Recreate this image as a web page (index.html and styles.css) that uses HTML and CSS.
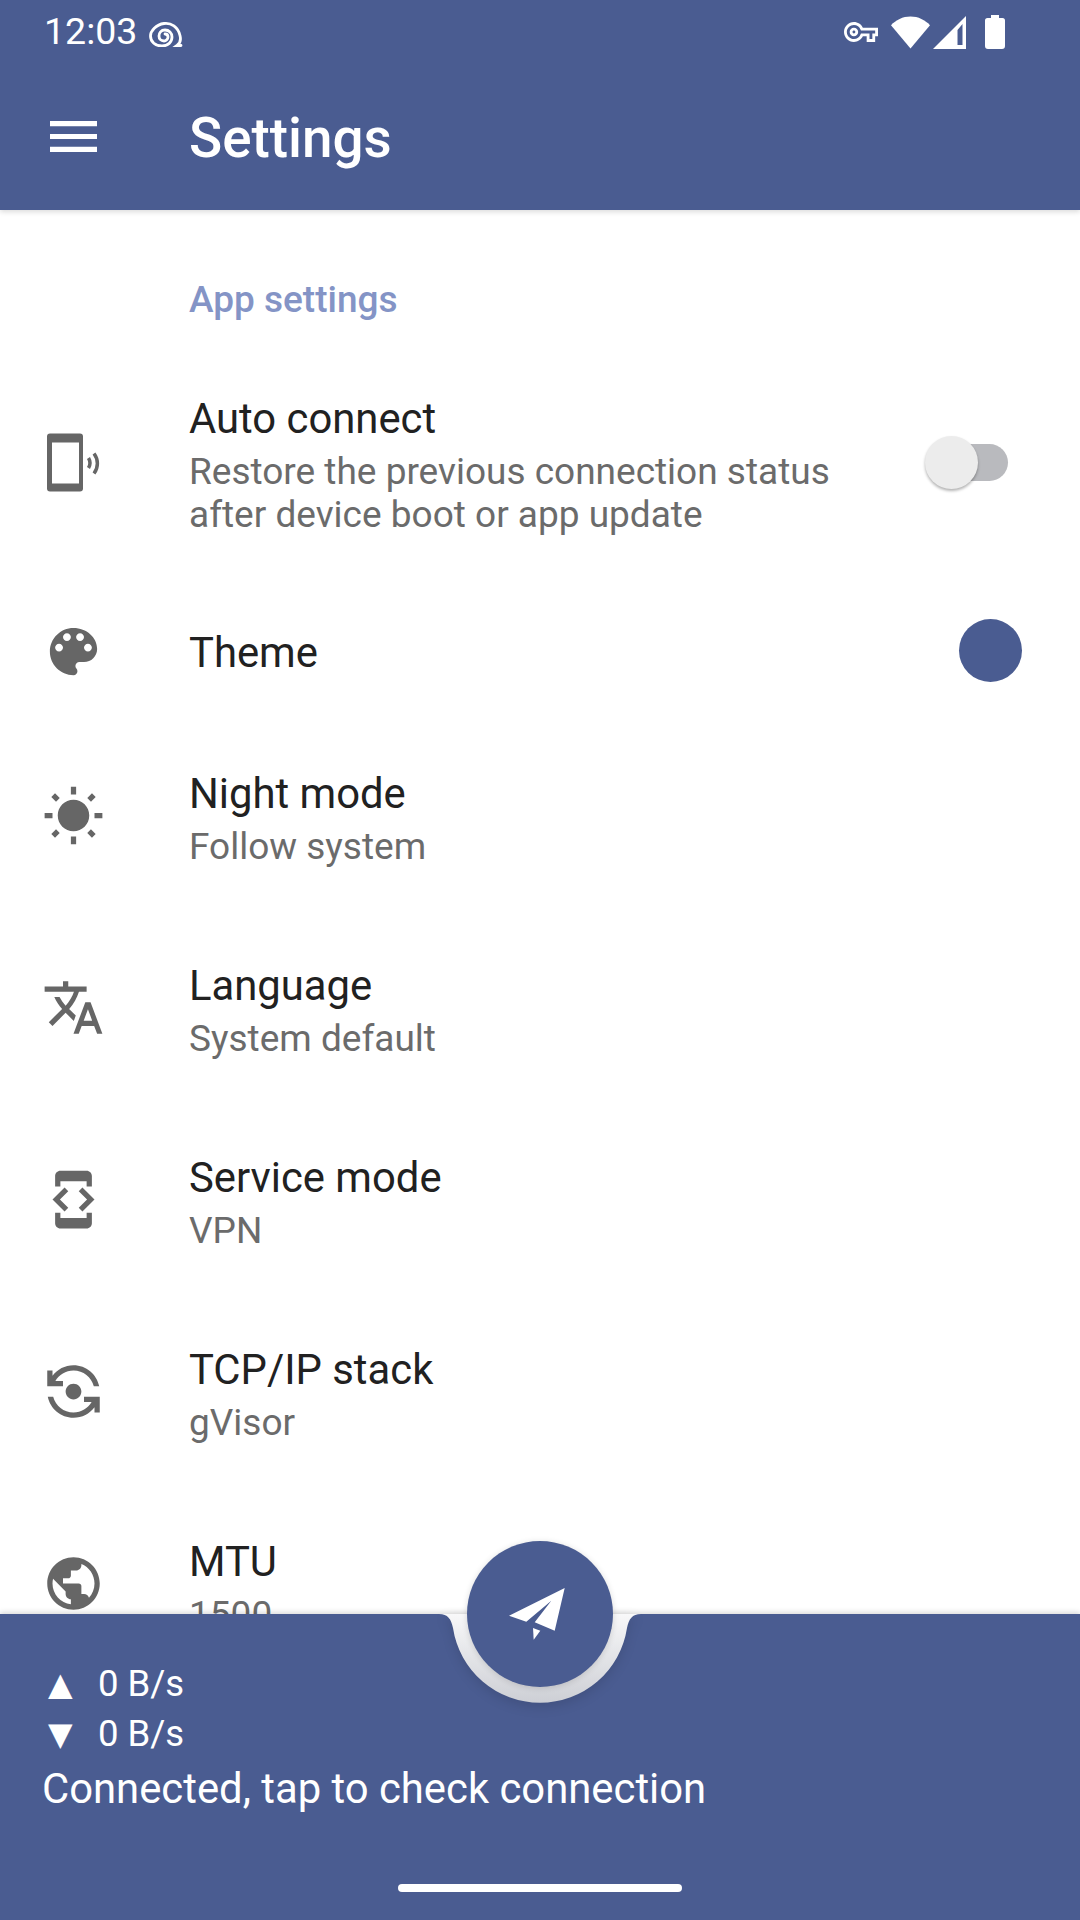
FILE: index.html
```html
<!DOCTYPE html>
<html lang="en">
<head>
  <meta charset="UTF-8" />
  <title>Settings</title>
  <link rel="stylesheet" href="styles.css">
</head>
<body>
  <header class="appbar">
    <div class="statusbar">
      <div class="status-left">
        <span class="clock">12:03</span>
        <svg class="snail" viewBox="0 0 34 26" fill="none" stroke="#fff" stroke-width="2.800" stroke-linecap="round"><path d="M32 24.500h-4c3-2 4-6 3-10C29 6 22 1.500 15 2.500 7 3.500 1.500 10 1.500 15c0 6 5 10 11.500 10 6 0 10-4 10-9 0-4-3-7-7-7-4 0-6 3-6 6 0 3 2 5 5 5 2 0 4-2 4-4 0-2-1-3-3-3"/></svg>
      </div>
      <div class="status-right">
        <svg class="st-key" viewBox="0 5 24 14"><path fill="#fff" d="M22 19h-6v-4h-2.680c-1.140 2.420-3.600 4-6.320 4-3.860 0-7-3.140-7-7s3.140-7 7-7c2.720 0 5.170 1.580 6.320 4H24v6h-2v4zm-4-2h2v-4h2v-2H11.960l-.23-.67C11.040 8.340 9.150 7 7 7c-2.760 0-5 2.240-5 5s2.240 5 5 5c2.150 0 4.040-1.340 4.730-3.330l.23-.67H18v4zM7 15c-1.650 0-3-1.350-3-3s1.350-3 3-3 3 1.350 3 3-1.350 3-3 3zm0-4c-.55 0-1 .45-1 1s.45 1 1 1 1-.45 1-1-.45-1-1-1z"/></svg>
        <svg class="st-wifi" viewBox="0 0 40 33"><path fill="#fff" d="M20 33 0 9C5 3.500 12 0 20 0s15 3.500 20 9z"/></svg>
        <svg class="st-signal" viewBox="0 0 33 33"><path fill="#fff" fill-rule="evenodd" d="M33 0v33H0zM29.500 8l-5 6v15h5z"/></svg>
        <svg class="st-battery" viewBox="0 0 20 34"><path fill="#fff" d="M6 0h8v3h3.500A2.500 2.500 0 0 1 20 5.500V31a3 3 0 0 1-3 3H3a3 3 0 0 1-3-3V5.500A2.500 2.500 0 0 1 2.500 3H6z"/></svg>
      </div>
    </div>
    <div class="toolbar">
      <svg class="menu-icon" viewBox="3 6 18 12" preserveAspectRatio="none"><path fill="#fff" d="M3 18h18v-2H3v2zm0-5h18v-2H3v2zm0-7v2h18V6H3z"/></svg>
      <h1 class="toolbar-title">Settings</h1>
    </div>
  </header>

  <main class="list">
    <div class="section-title">App settings</div>

    <div class="row row-auto">
      <svg class="row-icon" viewBox="0 0 63 63"><path fill="#666" fill-rule="evenodd" d="M8 1.500h30a3 3 0 0 1 3 3v52a3 3 0 0 1-3 3H8a3 3 0 0 1-3-3v-52a3 3 0 0 1 3-3zm2 9v41h27v-41z"/><path fill="none" stroke="#666" stroke-width="3.500" d="M46.500 26c1.800 3 1.800 7 0 10M52 21.500c4.500 6 4.500 14 0 20"/></svg>
      <div class="row-text">
        <div class="row-title">Auto connect</div>
        <div class="row-sub">Restore the previous connection status<br>after device boot or app update</div>
      </div>
      <div class="switch"><span class="switch-thumb"></span></div>
    </div>

    <div class="row row-theme">
      <svg class="row-icon" viewBox="0 0 24 24"><path fill="#666" d="M12 3c-4.970 0-9 4.030-9 9s4.030 9 9 9c.83 0 1.500-.67 1.500-1.500 0-.39-.15-.74-.39-1.010-.23-.26-.38-.61-.38-.99 0-.83.67-1.500 1.500-1.500H16c2.760 0 5-2.240 5-5 0-4.420-4.030-8-9-8zm-5.500 9c-.83 0-1.500-.67-1.500-1.500S5.670 9 6.500 9 8 9.670 8 10.500 7.330 12 6.500 12zm3-4C8.670 8 8 7.330 8 6.500S8.670 5 9.500 5s1.500.67 1.500 1.500S10.330 8 9.500 8zm5 0c-.83 0-1.500-.67-1.500-1.500S13.670 5 14.500 5s1.500.67 1.500 1.500S15.330 8 14.500 8zm3 4c-.83 0-1.500-.67-1.500-1.500S16.670 9 17.500 9s1.500.67 1.500 1.500-.67 1.500-1.500 1.500z"/></svg>
      <div class="row-text">
        <div class="row-title">Theme</div>
      </div>
      <span class="theme-dot"></span>
    </div>

    <div class="row">
      <svg class="row-icon" viewBox="0 -.5 24 24"><path fill="#666" d="M6.760 4.840l-1.800-1.790-1.410 1.410 1.790 1.790 1.420-1.410zM4 10.500H1v2h3v-2zm9-9.950h-2V3.500h2V.55zm7.450 3.910l-1.410-1.410-1.790 1.790 1.410 1.410 1.790-1.790zm-3.210 13.700l1.790 1.800 1.410-1.410-1.800-1.790-1.400 1.400zM20 10.500v2h3v-2h-3zm-8-5c-3.310 0-6 2.690-6 6s2.690 6 6 6 6-2.690 6-6-2.690-6-6-6zm-1 16.950h2V19.500h-2v2.950zm-7.450-3.910l1.410 1.410 1.790-1.800-1.410-1.410-1.790 1.800z"/></svg>
      <div class="row-text">
        <div class="row-title">Night mode</div>
        <div class="row-sub">Follow system</div>
      </div>
    </div>

    <div class="row">
      <svg class="row-icon" viewBox="0 0 24 24"><path fill="#666" d="M12.870 15.070l-2.540-2.510.03-.03c1.740-1.940 2.980-4.170 3.710-6.530H17V4h-7V2H8v2H1v1.990h11.170C11.500 7.920 10.440 9.750 9 11.350 8.070 10.320 7.300 9.190 6.690 8h-2c.73 1.630 1.730 3.170 2.980 4.560l-5.090 5.020L4 19l5-5 3.110 3.110.76-2.040zM18.500 10h-2L12 22h2l1.120-3h4.750L21 22h2l-4.500-12zm-2.620 7l1.620-4.330L19.120 17h-3.240z"/></svg>
      <div class="row-text">
        <div class="row-title">Language</div>
        <div class="row-sub">System default</div>
      </div>
    </div>

    <div class="row">
      <svg class="row-icon" viewBox="0 0 24 24"><path fill="#666" d="M7 5h10v2h2V3c0-1.100-.9-1.990-2-1.990L7 1c-1.100 0-2 .9-2 2v4h2V5zm8.410 11.590L20 12l-4.590-4.590L14 8.830 17.170 12 14 15.170l1.410 1.420zM10 15.170L6.830 12 10 8.830 8.590 7.410 4 12l4.590 4.590L10 15.170zM17 19H7v-2H5v4c0 1.100.9 2 2 2h10c1.100 0 2-.9 2-2v-4h-2v2z"/></svg>
      <div class="row-text">
        <div class="row-title">Service mode</div>
        <div class="row-sub">VPN</div>
      </div>
    </div>

    <div class="row">
      <svg class="row-icon" viewBox="0 0 24 24"><path fill="#666" d="M9 12c0 1.660 1.340 3 3 3s3-1.340 3-3-1.340-3-3-3-3 1.340-3 3zM8 10V8H5.090C6.470 5.610 9.050 4 12 4c3.720 0 6.850 2.560 7.740 6h2.060c-.93-4.560-4.960-8-9.800-8C8.730 2 5.820 3.580 4 6.010V4H2v6h6zM16 14v2h2.910c-1.380 2.390-3.960 4-6.910 4-3.720 0-6.850-2.560-7.740-6H2.200c.93 4.560 4.960 8 9.800 8 3.270 0 6.180-1.580 8-4.010V20h2v-6h-6z"/></svg>
      <div class="row-text">
        <div class="row-title">TCP/IP stack</div>
        <div class="row-sub">gVisor</div>
      </div>
    </div>

    <div class="row">
      <svg class="row-icon" viewBox="0 0 24 24"><path fill="#666" d="M12 2C6.480 2 2 6.480 2 12s4.480 10 10 10 10-4.480 10-10S17.520 2 12 2zm-1 17.930c-3.950-.49-7-3.850-7-7.930 0-.62.08-1.210.21-1.790L9 15v1c0 1.100.9 2 2 2v1.930zm6.900-2.540c-.26-.81-1-1.390-1.900-1.390h-1v-3c0-.55-.45-1-1-1H8v-2h2c.55 0 1-.45 1-1V7h2c1.100 0 2-.9 2-2v-.41c2.930 1.190 5 4.060 5 7.410 0 2.080-.8 3.970-2.100 5.390z"/></svg>
      <div class="row-text">
        <div class="row-title">MTU</div>
        <div class="row-sub">1500</div>
      </div>
    </div>
  </main>

  <footer class="bottombar">
    <svg class="notch" viewBox="0 0 240 110">
      <defs>
        <linearGradient id="notchFill" x1="0" y1="0" x2="0" y2="1">
          <stop offset="0" stop-color="#f8f8f9"/>
          <stop offset="1" stop-color="#cdcfd5"/>
        </linearGradient>
      </defs>
      <path fill="url(#notchFill)" d="M19 0C28 0 31 5 33 14A88 88 0 0 0 207 14C209 5 212 0 221 0Z"/>
    </svg>
    <button class="fab">
      <svg class="plane" viewBox="0 0 56 52"><path fill="#fff" d="M55.700 0 0 27.700l17.300 6 25-21-16.600 21.600 20 8.400z"/><path fill="#fff" d="M24 40l7.300 2.700-6.600 9z"/></svg>
    </button>
    <div class="speed-line"><span class="arrow">▲</span>0 B/s</div>
    <div class="speed-line"><span class="arrow">▼</span>0 B/s</div>
    <div class="conn-status">Connected, tap to check connection</div>
    <div class="home-indicator"></div>
  </footer>
</body>
</html>
```

FILE: styles.css
```css
html, body {
  margin: 0;
  padding: 0;
}

body {
  width: 1080px;
  height: 1920px;
  overflow: hidden;
  display: flex;
  flex-direction: column;
  background: #fff;
  font-family: Roboto, sans-serif;
}

.appbar {
  height: 210px;
  flex: none;
  background: #4a5c91;
  color: #fff;
  box-shadow: 0 2px 5px rgba(0, 0, 0, .14);
  position: relative;
  z-index: 2;
}

.statusbar {
  height: 66px;
  box-sizing: border-box;
  padding: 0 75px 2px 44px;
  display: flex;
  justify-content: space-between;
  align-items: center;
}

.status-left {
  display: flex;
  align-items: center;
  gap: 12px;
}

.clock {
  font-size: 37.500px;
  margin-bottom: 2px;
}

.snail {
  width: 34px;
  height: 26px;
  margin-top: 4px;
}

.status-right {
  display: flex;
  align-items: center;
}

.st-key {
  width: 34px;
  height: 20px;
  margin-right: 13px;
}

.st-wifi {
  width: 39px;
  height: 33px;
  margin-right: 3px;
}

.st-signal {
  width: 33px;
  height: 33px;
  margin-right: 19px;
}

.st-battery {
  width: 20px;
  height: 34px;
}

.toolbar {
  height: 144px;
  display: flex;
  align-items: center;
}

.menu-icon {
  width: 47px;
  height: 31px;
  margin: 0 92px 3px 50px;
}

.toolbar-title {
  margin: 0;
  font-size: 54.800px;
  font-weight: 500;
}

.list {
  flex: 1;
  min-height: 0;
  overflow: hidden;
}

.section-title {
  height: 133px;
  box-sizing: border-box;
  padding: 68px 0 0 189px;
  font-size: 37px;
  line-height: 44px;
  font-weight: 500;
  color: #8494c6;
}

.row {
  height: 192px;
  display: flex;
  align-items: center;
}

.row-auto {
  height: 240px;
}

.row-theme {
  height: 136px;
}

.row-icon {
  width: 63px;
  height: 63px;
  flex: none;
  margin-left: 42px;
  margin-right: 84px;
}

.row-text {
  flex: 1;
  padding-top: 7px;
}

.row-auto .row-text {
  padding-top: 3px;
}

.row-theme .row-text {
  padding-top: 4px;
}

.row-title {
  font-size: 41.800px;
  line-height: 50px;
  color: #212121;
}

.row-sub {
  font-size: 37px;
  line-height: 43px;
  color: #6b6b6b;
  margin-top: 6px;
}

.switch {
  width: 78px;
  height: 37px;
  margin: 0 72px 2px 0;
  border-radius: 19px;
  background: #b9babe;
  position: relative;
}

.switch-thumb {
  position: absolute;
  left: -5px;
  top: -8px;
  width: 53px;
  height: 53px;
  border-radius: 50%;
  background: #ececec;
  box-shadow: 0 2px 3px rgba(0, 0, 0, .3);
}

.theme-dot {
  width: 63px;
  height: 63px;
  margin: 0 58px 2px 0;
  border-radius: 50%;
  background: #4a5c91;
}

.bottombar {
  height: 306px;
  flex: none;
  box-sizing: border-box;
  padding: 45px 0 0 42px;
  background: #4a5c91;
  color: #fff;
  position: relative;
  z-index: 3;
  box-shadow: 0 -2px 5px rgba(0, 0, 0, .14);
}

.notch {
  position: absolute;
  left: 420px;
  top: 0;
  width: 240px;
  height: 110px;
  filter: drop-shadow(0 4px 6px rgba(0, 0, 0, .12));
}

.fab {
  position: absolute;
  left: 467px;
  top: -73px;
  width: 146px;
  height: 146px;
  padding: 0;
  border: none;
  border-radius: 50%;
  background: #4a5c91;
  box-shadow: 0 1px 6px rgba(0, 0, 0, .14);
  display: flex;
  align-items: center;
  justify-content: center;
}

.plane {
  width: 56px;
  height: 52px;
  margin-right: 6px;
}

.speed-line {
  font-size: 36.500px;
  line-height: 50px;
  display: flex;
  align-items: center;
}

.arrow {
  width: 56px;
  padding-left: 6px;
  box-sizing: border-box;
  font-family: "DejaVu Sans", sans-serif;
  font-size: 32px;
}

.conn-status {
  font-size: 41.800px;
  line-height: 54px;
  margin-top: 3px;
  white-space: nowrap;
}

.home-indicator {
  position: absolute;
  left: 398px;
  bottom: 28px;
  width: 284px;
  height: 8px;
  border-radius: 4px;
  background: #fff;
}
```
